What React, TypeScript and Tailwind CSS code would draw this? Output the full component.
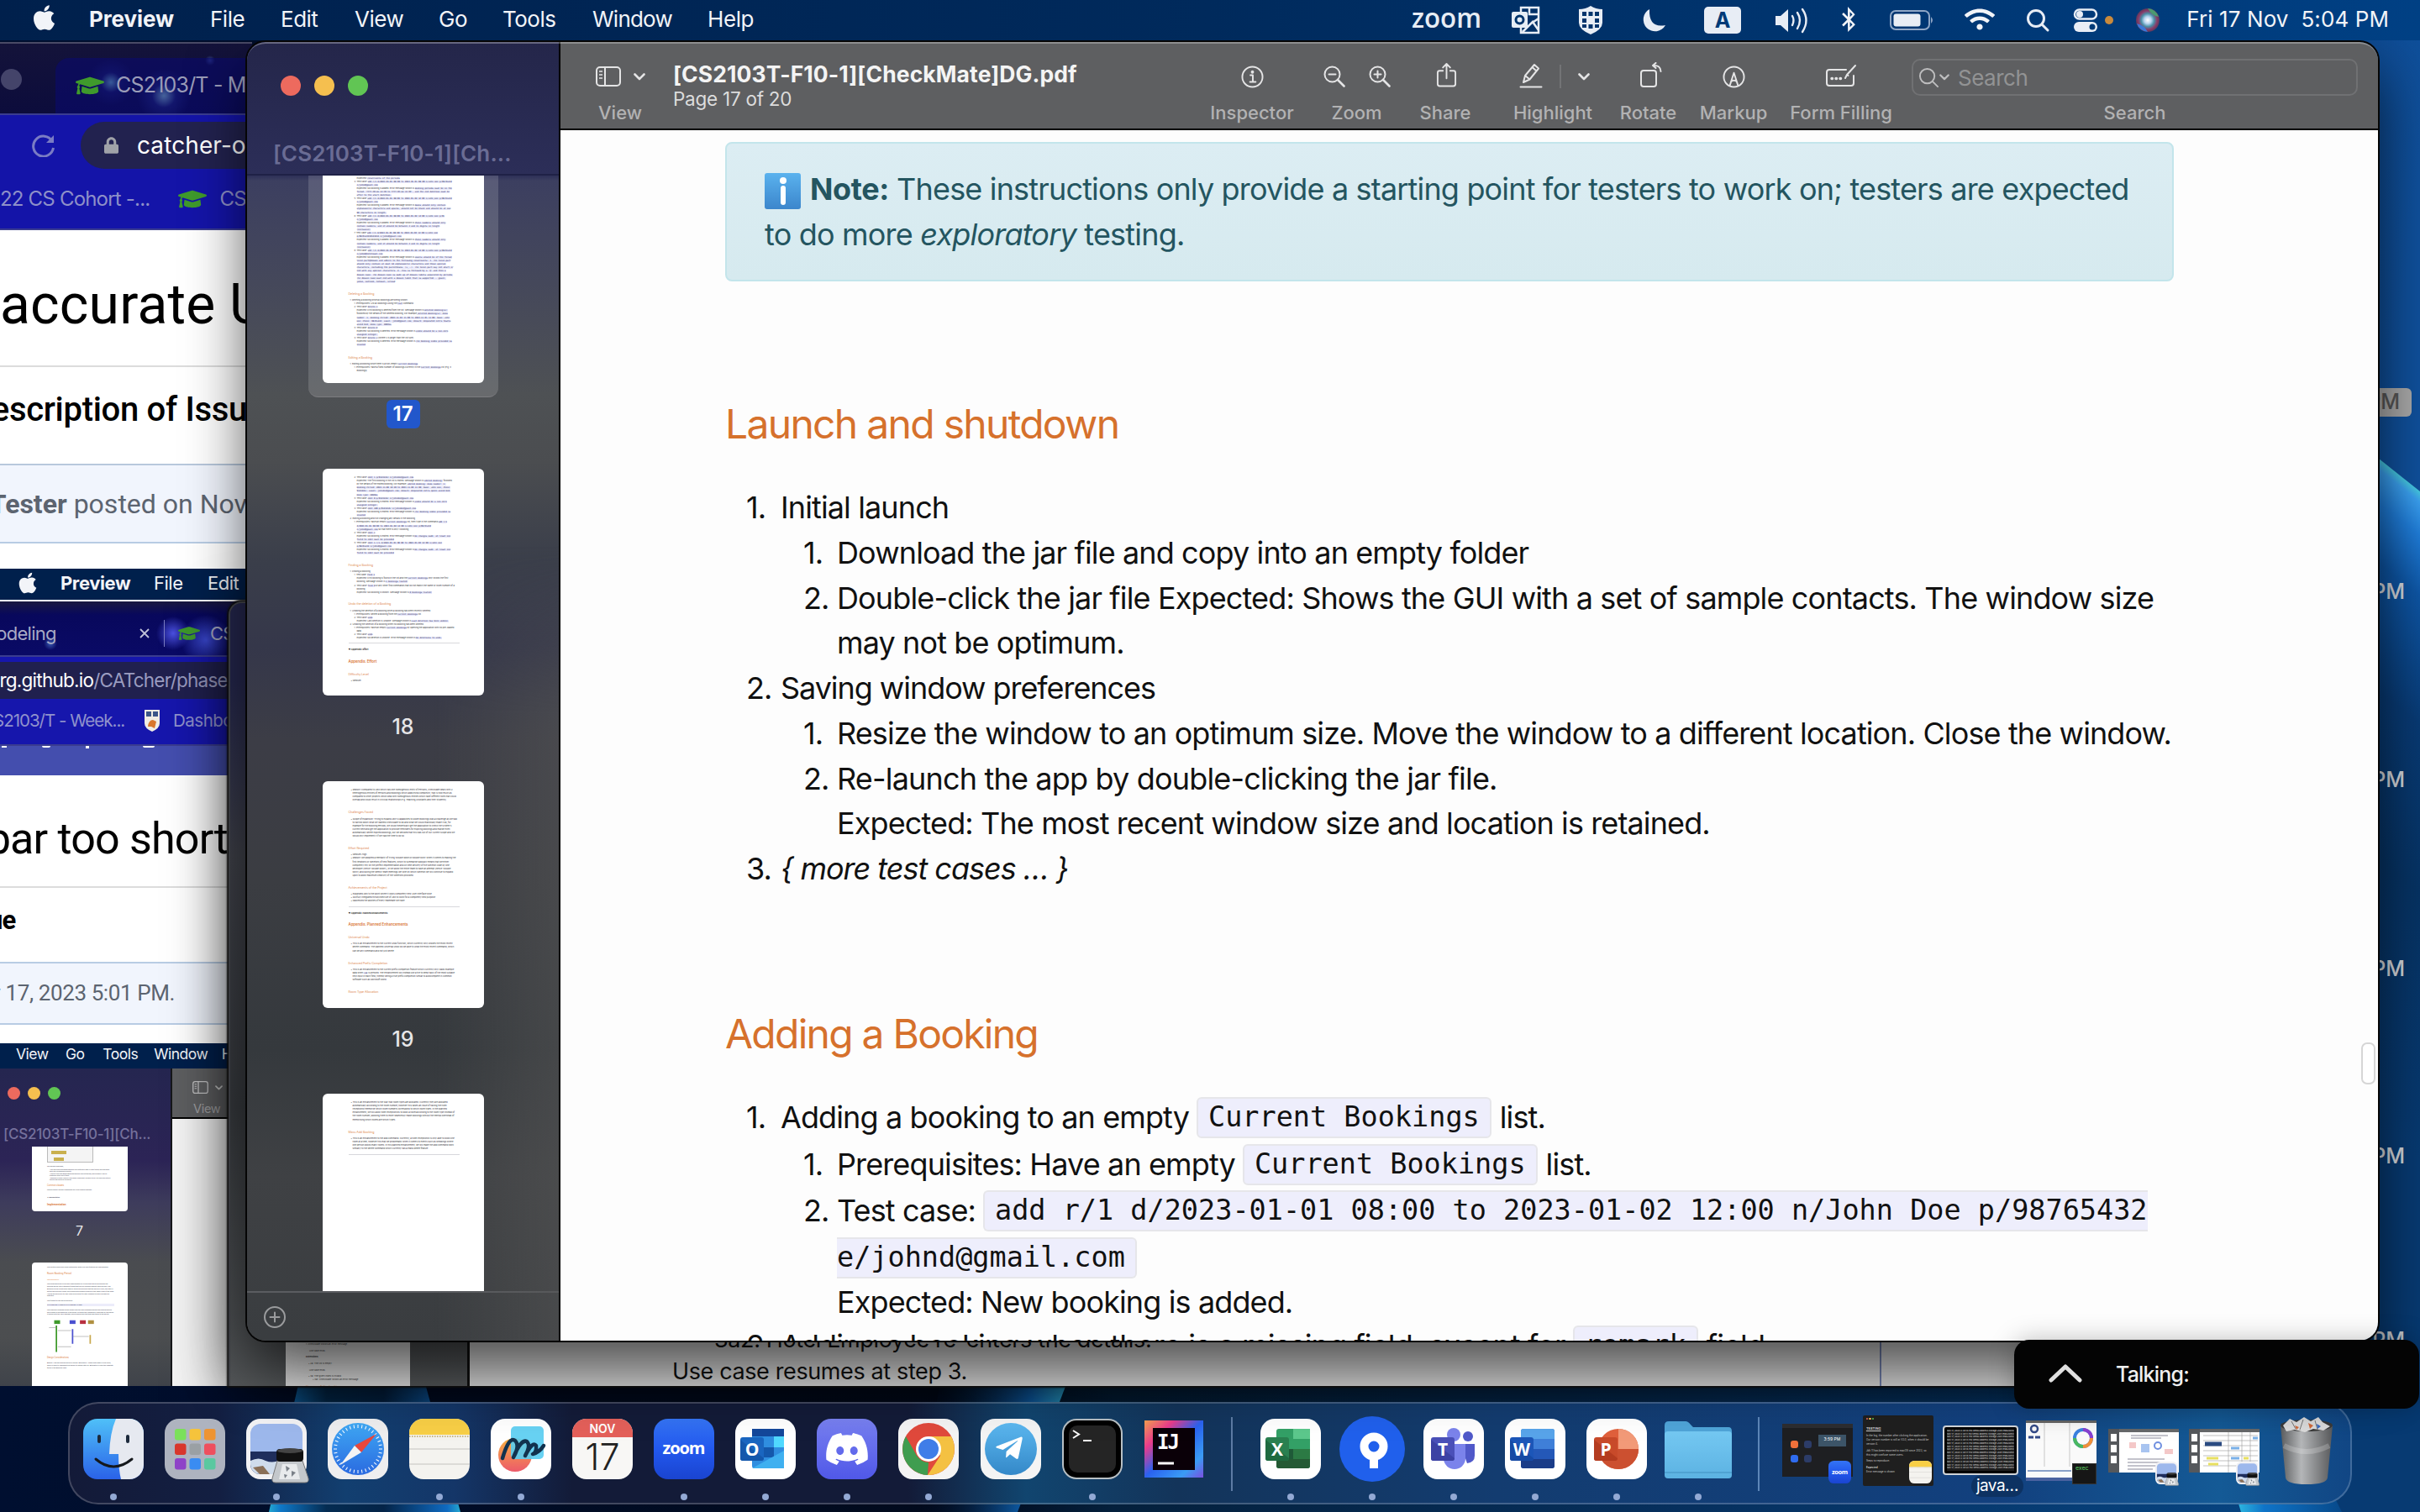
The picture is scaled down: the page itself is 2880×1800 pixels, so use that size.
import React from "react";
import { FaApple, FaBluetoothB, FaWifi, FaGraduationCap, FaDiscord, FaTelegramPlane, FaLock } from "react-icons/fa";

/* ---------- shared helpers ---------- */

function Rich({ text, code }: { text: string; code: string }) {
  return (
    <>
      {text.split("`").map((part, i) =>
        i % 2 ? (
          <span key={i} className={code}>
            {part}
          </span>
        ) : (
          <span key={i}>{part}</span>
        )
      )}
    </>
  );
}

function Chevron({ className }: { className: string }) {
  return (
    <svg viewBox="0 0 14 9" className={className} fill="none" stroke="currentColor" strokeWidth="2.6" strokeLinecap="round" strokeLinejoin="round">
      <path d="M1.5 1.5 7 7l5.500-5.500" />
    </svg>
  );
}

function SidebarIcon({ className }: { className: string }) {
  return (
    <svg viewBox="0 0 30 24" className={className} fill="none" stroke="currentColor" strokeWidth="2">
      <rect x="1" y="1" width="28" height="22" rx="4" />
      <path d="M11 1v22" />
      <path d="M4 6h4M4 10h4M4 14h4" strokeWidth="1.600" />
    </svg>
  );
}

/* ---------- wallpaper ---------- */

function Wallpaper() {
  return (
    <svg viewBox="0 0 2880 1800" className="absolute inset-0 h-[1800px] w-[2880px]">
      <defs>
        <linearGradient id="sky" x1="0" x2="1" y1="0" y2="0">
          <stop offset="0" stopColor="#000f30" />
          <stop offset=".4" stopColor="#010a1c" />
          <stop offset=".46" stopColor="#04203c" />
          <stop offset=".7" stopColor="#06305e" />
          <stop offset="1" stopColor="#07498a" />
        </linearGradient>
        <linearGradient id="right" x1="0" x2="1" y1="0" y2=".25">
          <stop offset="0" stopColor="#0a3a74" />
          <stop offset="1" stopColor="#0f509c" />
        </linearGradient>
        <linearGradient id="petal" gradientUnits="userSpaceOnUse" x1="2855" y1="562" x2="2465" y2="1052">
          <stop offset="0" stopColor="#48d4dc" />
          <stop offset=".02" stopColor="#3aa0f0" />
          <stop offset=".07" stopColor="#1f7cd8" />
          <stop offset=".16" stopColor="#0d55a4" />
          <stop offset=".35" stopColor="#083a74" />
          <stop offset=".6" stopColor="#063364" />
          <stop offset="1" stopColor="#073a72" />
        </linearGradient>
        <linearGradient id="stem" x1="0" x2="1" y1="0" y2="0">
          <stop offset="0" stopColor="#25a8d0" />
          <stop offset=".06" stopColor="#0f78c8" />
          <stop offset=".3" stopColor="#042c52" />
          <stop offset=".6" stopColor="#042448" />
          <stop offset=".93" stopColor="#0f6ac0" />
          <stop offset="1" stopColor="#25a8d0" />
        </linearGradient>
        <linearGradient id="leaf" x1="0" x2="1" y1="0" y2="0">
          <stop offset="0" stopColor="#010a1c" stopOpacity="0" />
          <stop offset=".75" stopColor="#0f66b8" />
          <stop offset="1" stopColor="#2fb4e0" />
        </linearGradient>
        <linearGradient id="tail" x1="0" x2="1" y1="0" y2="0">
          <stop offset="0" stopColor="#35c8e6" />
          <stop offset=".3" stopColor="#0f74c8" />
          <stop offset="1" stopColor="#07498a" />
        </linearGradient>
      </defs>
      <rect width="2880" height="1800" fill="url(#sky)" />
      <rect x="2600" width="280" height="700" fill="url(#right)" />
      <path d="M2700 442 2831 546 2880 585V1800H2700Z" fill="url(#petal)" />
      <path d="M357 1640h147l44 160H320Z" fill="url(#stem)" />
      <path d="M1120 1640h152l-61 160h-120Z" fill="url(#leaf)" />
      <path d="M2655 1760l12 40h120l-20-40Z" fill="url(#tail)" />
    </svg>
  );
}

function DesktopLabels() {
  const rows = [704, 928, 1153, 1376, 1595];
  return (
    <>
      <div className="absolute left-[2780px] top-[462px] flex h-[34px] w-[90px] items-center justify-end rounded-md bg-[#a9a9a9] pr-[14px] text-[25px] font-medium text-[#565656]">
        PM
      </div>
      {rows.map((y) => (
        <div key={y} className="absolute left-[2780px] w-[82px] text-right text-[25px] font-medium leading-[34px] text-[#d6d8dc]" style={{ top: y - 17 }}>
          PM
        </div>
      ))}
    </>
  );
}

/* ---------- menu bar ---------- */

function StatusIcons() {
  return (
    <svg viewBox="1660 0 930 48" className="h-[48px] w-[930px] shrink-0" fill="#e8edf5">
      <text x="1680" y="32.500" fontSize="33" fontFamily="Open Sans" fontWeight="600" textLength="83" lengthAdjust="spacingAndGlyphs">zoom</text>
      <g fill="none" stroke="#e8edf5" strokeWidth="2.500">
        <path d="M1810 14V9h21v30h-21v-6M1820 9v8h11M1812 38l12-12 7 10M1831 22l-9 6" />
      </g>
      <rect x="1799" y="14" width="19" height="19" rx="2" />
      <circle cx="1808.500" cy="23.500" r="4.500" fill="none" stroke="#00346c" strokeWidth="3" />
      <path d="M1879 11q8 0 14-4 6 4 14 4v16q0 8-14 14-14-6-14-14z" />
      <g fill="#00346c">
        <rect x="1883" y="14" width="5" height="5" /><rect x="1890.500" y="14" width="5" height="5" /><rect x="1898" y="14" width="5" height="5" />
        <rect x="1883" y="22" width="5" height="5" /><rect x="1898" y="22" width="5" height="5" />
        <rect x="1883" y="29" width="5" height="4" /><rect x="1890.500" y="29" width="5" height="5" /><rect x="1898" y="29" width="5" height="4" />
      </g>
      <path d="M1963 11a14 14 0 1 0 19 19q-20 4-19-19z" />
      <rect x="2028" y="8" width="44" height="32" rx="5" />
      <text x="2050" y="33" fontSize="25" fontWeight="700" fontFamily="Inter" textAnchor="middle" fill="#003a77">A</text>
      <path d="M2113 19h6l9-8v27l-9-8h-6z" />
      <g fill="none" stroke="#e8edf5" strokeWidth="2.400" strokeLinecap="round">
        <path d="M2133 19q3 5 0 11M2139 15q6 9 0 19M2145 11q9 13 0 27" />
      </g>
      <rect x="2250" y="13" width="46" height="22" rx="6" fill="none" stroke="#8fa6c6" strokeWidth="2" />
      <rect x="2253.500" y="16.500" width="32" height="15" rx="3" />
      <path d="M2298 20q4 4 0 8z" fill="#8fa6c6" />
      <g fill="none" stroke="#e8edf5" strokeWidth="3">
        <circle cx="2423" cy="22" r="9.500" />
        <path d="m2430 29 7 7" strokeLinecap="round" />
        <rect x="2469" y="11.500" width="26" height="11" rx="5.500" strokeWidth="2.500" />
      </g>
      <circle cx="2475" cy="17" r="4" />
      <rect x="2468" y="26" width="28" height="12" rx="6" />
      <circle cx="2490" cy="32" r="3.500" fill="#003a77" />
      <circle cx="2510" cy="24" r="5" fill="#c98a3c" />
      <defs>
        <radialGradient id="siri">
          <stop offset="0" stopColor="#fff" /><stop offset=".3" stopColor="#b8d4f0" /><stop offset=".55" stopColor="#4a90a8" /><stop offset=".8" stopColor="#8a3a68" /><stop offset="1" stopColor="#5a3a5c" />
        </radialGradient>
      </defs>
      <circle cx="2556" cy="24" r="14" fill="url(#siri)" />
      <path d="M2543 28a14 14 0 0 0 13 10q-4-8-13-10z" fill="#3a78d8" />
      <path d="M2556 10a14 14 0 0 1 13 10q-8-1-13-10z" fill="#4a9a70" />
    </svg>
  );
}

function MenuBar() {
  return (
    <div className="absolute left-0 top-0 flex h-[48px] w-[2880px] items-center bg-gradient-to-r from-[#00204c] via-[#002a5c] to-[#004084] text-[26px] text-[#f2f4f8]">
      <FaApple className="ml-[38px] h-[34px] w-[29px] -translate-y-[3px]" />
      <div className="flex pb-[3px]">
        <span className="ml-[39px] w-[144px] font-bold tracking-[-0.1px]">Preview</span>
        <span className="w-[84px] tracking-[-0.5px]">File</span>
        <span className="w-[88px] tracking-[-0.5px]">Edit</span>
        <span className="w-[100px] tracking-[-0.5px]">View</span>
        <span className="w-[76px] tracking-[-0.5px]">Go</span>
        <span className="w-[107px] tracking-[-0.5px]">Tools</span>
        <span className="w-[137px] tracking-[-0.77px]">Window</span>
        <span className="tracking-[-0.4px]">Help</span>
      </div>
      <div className="relative ml-auto">
        <StatusIcons />
        <FaBluetoothB className="absolute left-[529px] top-[8px] h-[30px] w-[22px]" />
        <FaWifi className="absolute left-[678px] top-[8px] h-[30px] w-[36px]" />
      </div>
      <span className="ml-[12px] mr-[37px] whitespace-pre pb-[3px] tracking-[0.1px]">Fri 17 Nov  5:04 PM</span>
    </div>
  );
}

/* ---------- page thumbnails ---------- */

type Line = [number, number, string, string?]; // top gap, indent, text, kind

const P17: Line[] = [
  [3, 10, "Expected: `constraints of the periods`"],
  [0, 7, "4. Test case: `add r/1 d/2023-01-01 08:00 to 2023-01-01 08:00 n/John Doe p/98765432`"],
  [0, 10, "`e/johnd@gmail.com`"],
  [0, 10, "Expected: No booking is added. Error message shown is `Booking periods must be in the`"],
  [0, 10, "`format 'YYYY-MM-DD HH:MM to YYYY-MM-DD HH:MM', and the end datetime must be`"],
  [0, 10, "`after to the start datetime.`"],
  [0, 7, "5. Test case: `add r/1 d/2023-01-01 08:00 to 2023-01-02 12:00 n/John_Doe p/98765432`"],
  [0, 10, "`e/johnd@gmail.com`"],
  [0, 10, "Expected: No booking is added. Error message shown is `Names should only contain`"],
  [0, 10, "`alphanumeric characters and spaces, should not be blank and should be at max`"],
  [0, 10, "`80 characters in length.`"],
  [0, 7, "6. Test case: `add r/1 d/2023-01-01 08:00 to 2023-01-02 12:00 n/John Doe p/91`"],
  [0, 10, "`e/johnd@gmail.com`"],
  [0, 10, "Expected: No booking is added. Error message shown is `Phone numbers should only`"],
  [0, 10, "`contain numbers, and it should be between 3 and 15 digits in length`"],
  [0, 10, "`(inclusive)`"],
  [0, 7, "7. Test case: `add r/1 d/2023-01-01 08:00 to 2023-01-02 12:00 n/John Doe`"],
  [0, 10, "`p/9876543210123456 e/johnd@gmail.com`"],
  [0, 10, "Expected: No booking is added. Error message shown is `Phone numbers should only`"],
  [0, 10, "`contain numbers, and it should be between 3 and 15 digits in length`"],
  [0, 10, "`(inclusive)`"],
  [0, 7, "8. Test case: `add r/1 d/2023-01-01 08:00 to 2023-01-02 12:00 n/John Doe p/98765432`"],
  [0, 10, "`e/johnd@hotelmail.com`"],
  [0, 10, "Expected: No booking is added. Error message shown is `Emails should be of the format`"],
  [0, 10, "`local-part@domain and adhere to the following constraints: 1. The local-part`"],
  [0, 10, "`should only contain at most 50 alphanumeric characters and these special`"],
  [0, 10, "`characters, excluding the parentheses, (+_.-). The local-part may not start or`"],
  [0, 10, "`end with any special characters. 2. This is followed by a '@' and then a`"],
  [0, 10, "`domain name. The domain name is made up of domain labels separated by periods.`"],
  [0, 10, "`The domain name must end with a domain label that is supported -- gmail,`"],
  [0, 10, "`yahoo, outlook, hotmail, icloud`"],
  [11, 0, "Deleting a Booking", "h"],
  [3, 2, "1. Deleting a booking while all bookings are being shown"],
  [0, 7, "1. Prerequisites: List all bookings using the `list` command."],
  [0, 7, "2. Test case: `delete 1`"],
  [0, 10, "Expected: First booking is deleted from the list. Message shown is `Deleted Booking(s):`"],
  [0, 10, "followed by the details of the deleted booking. For example, `Deleted Booking(s): Room`"],
  [0, 10, "`number: 1; Booking Period: 2023-11-03 15:00 to 2023-11-05 11:00; Name: John`"],
  [0, 10, "`Doe; Phone: 98765432; Email: johnd@gmail.com; Remark: Requested extra towels`"],
  [0, 10, "`sized bed; Room Type: NORMAL`"],
  [0, 7, "3. Test case: `delete 0`"],
  [0, 10, "Expected: No booking is deleted. Error message shown is `Index should be a non-zero`"],
  [0, 10, "`unsigned integer.`"],
  [0, 7, "4. Test case: `delete x` (where x is larger than the list size)"],
  [0, 10, "Expected: No booking is deleted. Error message shown is `The booking index provided is`"],
  [0, 10, "`invalid`"],
  [11, 0, "Editing a Booking", "h"],
  [3, 2, "1. Editing a booking while there is a non-empty `Current Bookings`."],
  [0, 7, "1. Prerequisites: Have a fixed number of bookings currently in the `Current Bookings` list (e.g. 3"],
  [0, 10, "Bookings)"],
];

const P18: Line[] = [
  [8, 7, "2. Test case: `edit 1 p/91234567 e/johndoe@gmail.com`"],
  [0, 10, "Expected: The first booking in the list is edited. Message shown is `Edited Booking:` followed"],
  [0, 10, "by the details of the edited booking. For example, `Edited Booking: Room number: 1;`"],
  [0, 10, "`Booking Period: 2023-11-08 10:20 to 2023-11-09 11:00; Name: John Doe; Phone:`"],
  [0, 10, "`91234567; Email: johndoe@gmail.com; Remark: Requested extra queen sized bed;`"],
  [0, 10, "`Room Type: NORMAL`"],
  [0, 7, "3. Test case: `edit 0 p/91234567 e/johndoe@gmail.com`"],
  [0, 10, "Expected: No booking is edited. Error message shown is `Index should be a non-zero`"],
  [0, 10, "`unsigned integer.`"],
  [0, 7, "4. Test case: `edit 100 p/91234567 e/johndoe@gmail.com`"],
  [0, 10, "Expected: No booking is edited. Error message shown is `The booking index provided is`"],
  [0, 10, "`invalid`"],
  [0, 2, "2. Editing a booking and not changing any details in the booking."],
  [0, 7, "1. Prerequisites: Have an empty `Current Bookings` list, then type in the command `add r/1`"],
  [0, 10, "`d/2023-01-01 08:00 to 2023-01-02 12:00 n/John Doe p/98765432`"],
  [0, 10, "`e/johnd@gmail.com` so that there is only 1 booking."],
  [0, 7, "2. Test case: `edit 1`"],
  [0, 10, "Expected: No booking is edited. Error message shown is `No changes made. At least one`"],
  [0, 10, "`field to edit must be provided`"],
  [0, 7, "3. Test case: `edit 1 r/1 d/2023-01-01 08:00 to 2023-01-02 12:00 n/John Doe`"],
  [0, 10, "`p/98765432 e/johnd@gmail.com`"],
  [0, 10, "Expected: No booking is edited. Error message shown is `No changes made. At least one`"],
  [0, 10, "`field to edit must be provided`"],
  [10.5, 0, "Finding a Booking", "h"],
  [3, 2, "1. Finding a booking."],
  [0, 7, "1. Test case: `find 1`"],
  [0, 10, "Expected: First booking is found in the list and the `Current Bookings` only shows the first"],
  [0, 10, "booking. Message shown is `1 bookings listed!`"],
  [0, 7, "2. Test case: `find 0` or any other find commands that do not match the name or room number of a"],
  [0, 10, "booking."],
  [0, 10, "Expected: No booking is shown. Message shown is `0 bookings listed!`"],
  [10.5, 0, "Undo the deletion of a Booking", "h"],
  [3, 2, "1. Undoing the deletion of a booking when a booking has been recently deleted."],
  [0, 7, "1. Prerequisites: Delete a booking from the `Current Bookings` list."],
  [0, 7, "2. Test case: `undo`"],
  [0, 10, "Expected: Last deletion is undone. Message shown is `Last deletion has been undone.`"],
  [0, 2, "2. Undoing the deletion of a booking when no booking has been deleted."],
  [0, 7, "1. Prerequisites: Have an empty `Current Bookings` by opening the application with no pre-loaded"],
  [0, 10, "data."],
  [0, 7, "2. Test case: `undo`"],
  [0, 10, "Expected: No deletion is undone. Error message shown is `No deletions to undo.`"],
  [4, 0, "", "r"],
  [5, 0, "▼ Appendix: Effort", "b"],
  [10.5, 0, "Appendix: Effort", "H"],
  [11, 0, "Difficulty Level", "h"],
  [3, 3, "• Medium"],
];

const P19: Line[] = [
  [8, 3, "• Reason: Compared to AB3 which has one homogenous entity of Persons, CheckMate deals with 2"],
  [0, 5, "heterogenous entities of Persons and Bookings which adds extra complexity, that is how much as"],
  [0, 5, "compared to other projects which deal with homogenous entities which have different roles that could"],
  [0, 5, "overlap and could result in cyclical relationships e.g. Teaching Assistants and their students)."],
  [11, 0, "Challenges Faced", "h"],
  [3, 3, "• Scope of expansion: Trying to expand AB3's capabilities to Room Bookings was a challenge as we had"],
  [0, 5, "to narrow down what we wanted CheckMate to do and what we could realistically make it do, for"],
  [0, 5, "example for the Booking Periods, we could theoretically get the application to check the system's"],
  [0, 5, "current time and get the application to provide reminders for expiring bookings and maybe even"],
  [0, 5, "automatically delete expired bookings, but we decided that this was out of our current scope and we"],
  [0, 5, "would only implement it if we had the time to do so."],
  [11, 0, "Effort Required", "h"],
  [3, 3, "• Medium-High"],
  [0, 3, "• Reason: We adopted a mentality of trying 'Double down or double work' when it comes to making the"],
  [0, 5, "first iterations or skeletons of new features, which to summarise basically means that we either"],
  [0, 5, "completely rely on the perfect implementation and on time delivery of the skeleton code by one"],
  [0, 5, "developer (hence 'Double down'), or we allow the entire team to have an attempt (hence 'Double"],
  [0, 5, "work') and during the weekly team meetings we vote on which skeleton we will continue to expand"],
  [0, 5, "upon to allow maximum creativity of the skeletons provided."],
  [11, 0, "Achievements of the Project", "h"],
  [3, 3, "• Expanded AB3 to the point where it looks completely new User Interface wise."],
  [0, 3, "• Skillfully integrated the architecture of AB3 to work for a completely new purpose."],
  [0, 3, "• Maximised the abilities of every teammate we have."],
  [4, 0, "", "r"],
  [5, 0, "▼ Appendix: Planned Enhancements", "b"],
  [10.5, 0, "Appendix: Planned Enhancements", "H"],
  [11, 0, "Universal Undo", "h"],
  [3, 3, "• This is an enhancement to the current undo function, which currently only undoes the most recent"],
  [0, 5, "delete command. The planned universal undo will be able to undo the most recent command, which"],
  [0, 5, "can be any command and not just delete."],
  [11, 0, "Enhanced Prefix Completion", "h"],
  [3, 3, "• This is an enhancement to the current prefix completion feature which currently only loads example"],
  [0, 5, "data when `TAB` is pressed. The enhancement will instead use a trie to keep track of the most suitable"],
  [0, 5, "next input in each field, thereby being a true prefix completion similar to autocomplete in common"],
  [0, 5, "software such as Microsoft Word."],
  [11, 0, "Room Type Allocation", "h"],
];

const P20: Line[] = [
  [8, 3, "• This is an enhancement to the way that room types are allocated. Currently they are allocated"],
  [0, 5, "automatically according to the room number, however this raises an issue of having the hotel"],
  [0, 5, "receptionist memorise which room numbers correspond to which room types. In the planned"],
  [0, 5, "enhancement, we will allow hotel receptionists to book a room according to the room type instead of"],
  [0, 5, "the room number, allowing them to more seamlessly make bookings without the mental overhead of"],
  [0, 5, "memorising which rooms are which types."],
  [11, 0, "Mass Add Booking", "h"],
  [3, 3, "• This is an enhancement to the add command. Currently, a hotel receptionist is only able to book one"],
  [0, 5, "room at a time, however this may be problematic when it comes to events such as weddings where"],
  [0, 5, "one person books many rooms. In this planned enhancement, we will make the add command work"],
  [0, 5, "similarly to the delete command which currently has a mass delete feature."],
  [5, 0, "", "r"],
];

function PageText({ lines }: { lines: Line[] }) {
  return (
    <>
      {lines.map(([gap, indent, text, kind], i) => {
        if (kind === "r") return <div key={i} className="h-px w-[132px] bg-[#d8d8dc]" style={{ marginTop: gap }} />;
        const look =
          kind === "h" ? "text-[3.6px] text-[#e08a50]"
          : kind === "H" ? "text-[4.4px] font-semibold text-[#d9783a]"
          : kind === "b" ? "text-[2.7px] font-bold text-[#333]"
          : "text-[2.7px] text-[#3a3a42]";
        return (
          <div key={i} className={"h-[4.12px] whitespace-nowrap leading-[4.12px] tracking-[-0.06px] " + look} style={{ marginTop: gap, marginLeft: indent }}>
            <Rich text={text} code="bg-[#e8e8fa] font-['DejaVu_Sans_Mono'] text-[2.56px] text-[#2c2c5a]" />
          </div>
        );
      })}
    </>
  );
}

/* ---------- main Preview window ---------- */

function Sidebar() {
  return (
    <div className="relative flex w-[371px] shrink-0 flex-col overflow-hidden bg-[linear-gradient(180deg,#232549_0px,#2b2d56_158px,#3c3f60_165px,#46495a_300px,#4e5154_420px,#4b4d50_500px,#3a3e4a_620px,#35374a_720px,#3c3d46_830px,#3b3d42_1000px,#35393d_1200px,#3f4144_1350px,#3a3d40_1540px)]">
      <div className="pointer-events-none absolute right-0 top-[600px] h-[947px] w-[150px] bg-gradient-to-r from-transparent to-[#56565680] [mask-image:linear-gradient(180deg,transparent,black_200px)]" />
      <div className="flex h-[159px] shrink-0 flex-col border-b-2 border-[#1f2146] bg-[linear-gradient(180deg,#24264a,#2c2e58)]">
        <div className="mt-[40px] flex gap-4 pl-[40px]">
          <span className="size-6 rounded-full bg-[#ed6a5e]" />
          <span className="size-6 rounded-full bg-[#f5bf4f]" />
          <span className="size-6 rounded-full bg-[#61c554]" />
        </div>
        <div className="mt-[53px] pl-[31px] text-[26px] font-semibold leading-[32px] tracking-[0.15px] text-[#6a6c94]">[CS2103T-F10-1][Ch...</div>
      </div>
      <div className="relative flex flex-1 flex-col items-center overflow-hidden">
        <div className="h-[264px] w-[226px] shrink-0 rounded-b-xl border-b border-[#7c7c80] bg-white/15 px-[17px]">
          <div className="h-[247px] overflow-hidden rounded-b-[6px] bg-white pl-[31px]">
            <div className="-mt-[2.500px]">
              <PageText lines={P17} />
            </div>
          </div>
        </div>
        <div className="mt-[3px] flex h-[34px] w-[40px] shrink-0 items-center justify-center rounded-md bg-[#2257cb] text-[24px] font-semibold text-white">17</div>
        <Page lines={P18} className="mt-[48px] h-[270px]" />
        <Num>18</Num>
        <Page lines={P19} className="mt-[47px] h-[270px]" />
        <Num>19</Num>
        <Page lines={P20} className="mt-[47px] h-[270px]" />
      </div>
      <div className="flex h-[59px] shrink-0 items-center border-t-2 border-[#5a5c60] pl-[20px]">
        <svg viewBox="0 0 26 26" className="size-[26px]" fill="none" stroke="#9a9b9d" strokeWidth="2" strokeLinecap="round">
          <circle cx="13" cy="13" r="12" />
          <path d="M13 7.500v11M7.500 13h11" />
        </svg>
      </div>
    </div>
  );
}

function Page({ lines, className }: { lines: Line[]; className: string }) {
  return (
    <div className={"w-[192px] shrink-0 overflow-hidden rounded-[6px] bg-white pl-[31px] " + className}>
      <PageText lines={lines} />
    </div>
  );
}

function Num({ children }: { children: string }) {
  return <div className="mt-[21px] flex h-[34px] shrink-0 items-center text-[25px] font-medium text-[#e6e6e8]">{children}</div>;
}

function Tool({ label, className, children }: { label: string; className: string; children: React.ReactNode }) {
  return (
    <div className={"flex shrink-0 flex-col items-center pt-[22px] " + className}>
      <div className="flex h-[38px] items-center justify-center text-[#e4e4e5]">{children}</div>
      <div className="mt-[10px] h-[28px] whitespace-nowrap text-[22px] font-medium leading-[28px] text-[#b2b2b3]">{label}</div>
    </div>
  );
}

const stroke = { fill: "none", stroke: "currentColor", strokeWidth: 2, strokeLinecap: "round" as const, strokeLinejoin: "round" as const };

function Magnifier({ plus }: { plus?: boolean }) {
  return (
    <svg viewBox="0 0 26 26" className="size-[26px]" {...stroke}>
      <circle cx="10.500" cy="10.500" r="9" />
      <path d="m17 17 7.500 7.500" strokeWidth="2.600" />
      <path d={plus ? "M6.500 10.500h8M10.500 6.500v8" : "M6.500 10.500h8"} />
    </svg>
  );
}

function Toolbar() {
  return (
    <div className="flex h-[105px] shrink-0 border-b-2 border-black bg-[#5e5f61] pl-[8px]">
      <Tool label="View" className="w-[126px]">
        <SidebarIcon className="h-[24px] w-[30px]" />
        <Chevron className="ml-[15px] h-[9px] w-[14px]" />
      </Tool>
      <div className="w-[629px] pt-[20px]">
        <div className="text-[26.500px] font-bold leading-[36px] tracking-[0.1px] text-[#f4f4f4]">[CS2103T-F10-1][CheckMate]DG.pdf</div>
        <div className="-mt-[2px] text-[22.500px] leading-[28px] tracking-[-0.25px] text-[#dcdcdc]">Page 17 of 20</div>
      </div>
      <Tool label="Inspector" className="w-[120px]">
        <svg viewBox="0 0 28 28" className="size-[27px]" {...stroke}>
          <circle cx="14" cy="14" r="12.500" />
          <path d="M11.500 12H14.500V20M11 20.300h7" />
          <circle cx="14" cy="8" r="1" fill="currentColor" />
        </svg>
      </Tool>
      <Tool label="Zoom" className="w-[129px]">
        <Magnifier />
        <span className="w-[28px]" />
        <Magnifier plus />
      </Tool>
      <Tool label="Share" className="w-[82px]">
        <svg viewBox="0 0 26 32" className="-mt-[4px] ml-[2px] h-[31px] w-[25px]" {...stroke}>
          <path d="M8.500 10.500H4.500a2.500 2.500 0 0 0-2.500 2.500v14a2.500 2.500 0 0 0 2.500 2.500h17a2.500 2.500 0 0 0 2.500-2.500V13a2.500 2.500 0 0 0-2.500-2.500h-4M13 20V2M8.500 6.500 13 2l4.500 4.500" />
        </svg>
      </Tool>
      <Tool label="Highlight" className="ml-[27px] w-[120px]">
        <svg viewBox="0 0 28 30" className="-mt-[3px] ml-[3px] h-[30px] w-[28px]" {...stroke}>
          <path d="M1.500 28.500h25M5 23l2-8L18 2l5 4.500L12.500 19.500 5 23zM7 15l5.500 4.500M15.500 5l5 4.500" />
        </svg>
        <span className="mx-[20px] h-[28px] w-[2px] bg-[#737476]" />
        <Chevron className="h-[9px] w-[14px]" />
      </Tool>
      <Tool label="Rotate" className="w-[107px]">
        <svg viewBox="0 0 28 30" className="-mt-[4px] ml-[6px] h-[30px] w-[28px]" {...stroke}>
          <rect x="2" y="10" width="18" height="19" rx="3" />
          <path d="M16 4q9-1 9.500 7M19.500 1 16 4l3.500 3" />
        </svg>
      </Tool>
      <Tool label="Markup" className="w-[96px]">
        <svg viewBox="0 0 28 28" className="size-[27px]" {...stroke}>
          <circle cx="14" cy="14" r="12.500" />
          <path d="M9 24.500 14 9l5 15.500M11 19.500q3-2 6 0" />
        </svg>
      </Tool>
      <Tool label="Form Filling" className="w-[160px]">
        <svg viewBox="0 0 38 28" className="-mt-[2px] h-[28px] w-[38px]" {...stroke}>
          <path d="M25 7H5a3 3 0 0 0-3 3v13a3 3 0 0 0 3 3h26a3 3 0 0 0 3-3v-9M24 17l2-4L36 2M26 13l1.500 1" />
          <path d="M8 17.500h.5M13 17.500h.5M18 17.500h.5" strokeWidth="3.500" />
        </svg>
      </Tool>
      <div className="ml-[4px] flex w-[531px] flex-col items-center pt-[20px]">
        <div className="flex h-[44px] w-full items-center rounded-[10px] border-2 border-[#707173] pl-[6px] text-[#bdbdbe]">
          <svg viewBox="0 0 26 26" className="size-[25px]" {...stroke}>
            <circle cx="11" cy="11" r="9" />
            <path d="m17.500 17.500 6.500 6.500" />
          </svg>
          <Chevron className="h-[8px] w-[12px]" />
          <span className="ml-[10px] text-[26px] tracking-[-0.5px] text-[#929394]">Search</span>
        </div>
        <div className="mt-[6px] text-[22px] font-medium leading-[28px] text-[#b2b2b3]">Search</div>
      </div>
    </div>
  );
}

const CODE =
  "ml-[9px] mr-[10px] inline-flex h-[49px] items-center rounded-[6px] border-2 border-[#e6e6ea] bg-[#eeeefc] px-[12px] font-['DejaVu_Sans_Mono'] text-[33.5px] tracking-normal";
const CODE_HEAD =
  "ml-[9px] inline-flex h-[49px] items-center rounded-l-[6px] border-2 border-r-0 border-[#e6e6ea] bg-[#eeeefc] pl-[12px] font-['DejaVu_Sans_Mono'] text-[33.5px] tracking-normal";
const CODE_TAIL =
  "inline-flex h-[49px] items-center rounded-r-[6px] border-2 border-l-0 border-[#e6e6ea] bg-[#eeeefc] pr-[12px] font-['DejaVu_Sans_Mono'] text-[33.5px] tracking-normal";

function Item({ n, level, h, children }: { n?: string; level: 1 | 2; h?: string; children: React.ReactNode }) {
  return (
    <div className={"flex items-center whitespace-nowrap " + (h ?? "h-[53.8px]")}>
      <span className={"shrink-0 " + (level === 1 ? "w-[66px] pl-[25px]" : "w-[133px] pl-[93px]")}>{n}</span>
      {children}
    </div>
  );
}

function Document() {
  return (
    <div className="relative flex-1 overflow-hidden bg-[#fdfdfd] pl-[196px] text-[36px] tracking-[-0.88px] text-[#111]">
      <div className="w-[1724px]">
        <div className="mt-[14px] h-[166px] rounded-[8px] border-2 border-[#c3e5eb] bg-gradient-to-b from-[#dcedf3] to-[#d6eaef] pl-[45px] pt-[28px] leading-[53.8px] text-[#245560]">
          <div className="flex items-center whitespace-pre tracking-[-0.83px]">
            <span className="mr-[11px] mt-[4px] flex h-[43px] w-[43px] items-center justify-center rounded-[3px] bg-gradient-to-b from-[#5ab2ee] to-[#3c86cc]">
              <svg viewBox="0 0 12 36" className="h-[36px] w-[12px]" fill="#fff">
                <circle cx="6" cy="5" r="4" />
                <rect x="3" y="11" width="6" height="23" rx="3" />
              </svg>
            </span>
            <b className="tracking-[-0.4px]">Note:</b> These instructions only provide a starting point for testers to work on; testers are expected
          </div>
          <div className="tracking-[-0.8px]">
            to do more <i>exploratory</i> testing.
          </div>
        </div>
        <h2 className="mt-[141px] h-[58px] text-[48px] leading-[58px] tracking-[-1.7px] text-[#d6712c]">Launch and shutdown</h2>
        <div className="mt-[43px]">
          <Item n="1." level={1}>Initial launch</Item>
          <Item n="1." level={2}>Download the jar file and copy into an empty folder</Item>
          <Item n="2." level={2}><span className="tracking-[-0.86px]">Double-click the jar file Expected: Shows the GUI with a set of sample contacts. The window size</span></Item>
          <Item level={2}>may not be optimum.</Item>
          <Item n="2." level={1}><span className="tracking-[-1.05px]">Saving window preferences</span></Item>
          <Item n="1." level={2}>Resize the window to an optimum size. Move the window to a different location. Close the window.</Item>
          <Item n="2." level={2}><span className="tracking-[-0.82px]">Re-launch the app by double-clicking the jar file.</span></Item>
          <Item level={2}>Expected: The most recent window size and location is retained.</Item>
          <Item n="3." level={1}><i className="tracking-[-1.02px]">{"{ more test cases … }"}</i></Item>
        </div>
        <h2 className="mt-[141px] h-[58px] text-[48px] leading-[58px] tracking-[-1.75px] text-[#d6712c]">Adding a Booking</h2>
        <div className="mt-[43px]">
          <Item n="1." level={1} h="h-[54px]">Adding a booking to an empty<span className={CODE}>Current Bookings</span>list.</Item>
          <Item n="1." level={2} h="h-[58px]">Prerequisites: Have an empty<span className={CODE}>Current Bookings</span>list.</Item>
          <Item n="2." level={2} h="h-[52px]">Test case:<span className={CODE_HEAD}>add r/1 d/2023-01-01 08:00 to 2023-01-02 12:00 n/John Doe p/98765432</span></Item>
          <Item level={2} h="h-[60px]"><span className={CODE_TAIL}>e/johnd@gmail.com</span></Item>
          <Item level={2} h="h-[46px]">Expected: New booking is added.</Item>
          <Item n="2." level={1} h="h-[58px]">Adding a booking when there is a missing field, except for<span className={CODE}>remark</span>field.</Item>
        </div>
      </div>
      <div className="absolute right-[3px] top-[1086px] h-[50px] w-[17px] rounded-[7px] border-2 border-[#d6d6d6] bg-white" />
    </div>
  );
}

function MainWindow() {
  return (
    <div className="absolute left-[294px] top-[50px] flex h-[1546px] w-[2536px] overflow-hidden rounded-[22px] shadow-[0_0_0_2px_#050505,0_36px_70px_rgba(0,0,0,0.65)]">
      <Sidebar />
      <div className="w-[2px] shrink-0 bg-black" />
      <div className="flex min-w-0 flex-1 flex-col">
        <Toolbar />
        <Document />
      </div>
      <div className="pointer-events-none absolute inset-0 rounded-[22px] border-t-2 border-t-white/30" />
    </div>
  );
}

/* ---------- windows behind ---------- */

const STARS =
  "bg-[radial-gradient(circle_at_132px_46px,#7fd0d8_0,#2a3aa055_12px,transparent_28px),radial-gradient(circle_at_195px_62px,#a0e8e0_0,#3a50b066_14px,transparent_32px),radial-gradient(circle_at_250px_20px,#3a4a90_0,transparent_6px),linear-gradient(180deg,#14133a,#0c0c3c)]";

function ChromeBehind() {
  return (
    <div className="absolute left-0 top-[50px] flex h-[1599px] w-[300px] flex-col overflow-hidden border-t-2 border-[#4a4a66] bg-white font-[Roboto]">
      <div className={"flex h-[83px] shrink-0 items-end font-[Inter] " + STARS}>
        <span className="mb-[28px] ml-px size-[25px] rounded-full bg-[#44446a]" />
        <div className="ml-[40px] flex h-[66px] flex-1 items-center rounded-tl-2xl bg-[#0a0a6e]/60 pl-[24px] text-[25px] tracking-[-0.8px] text-[#9a9cb8]">
          <FaGraduationCap className="mr-[14px] h-[30px] w-[34px] text-[#3f9a2c]" />
          <span className="whitespace-nowrap">CS2103/T - M</span>
        </div>
      </div>
      <div className="h-[139px] shrink-0 border-y-2 border-[#3a3c90] bg-[#1414a8] font-[Inter]">
        <div className="flex h-[72px] items-center">
          <svg viewBox="0 0 28 28" className="ml-[38px] size-[28px]" fill="none" stroke="#7a7cc4" strokeWidth="3">
            <path d="M24 9A12 12 0 1 0 25.500 17" />
            <path d="M26 2v9h-9z" fill="#7a7cc4" stroke="none" />
          </svg>
          <div className="ml-[30px] flex h-[56px] flex-1 items-center rounded-l-full bg-[#22224f] pl-[28px] text-[28px] text-white">
            <FaLock className="mr-[22px] h-[22px] w-[17px] text-[#a0a2a8]" />
            <span className="tracking-[0.1px]">catcher-o</span>
          </div>
        </div>
        <div className="flex h-[46px] items-center whitespace-nowrap pt-[10px] text-[24px] tracking-[-0.8px] text-[#8e90c8]">
          <span>22 CS Cohort -...</span>
          <FaGraduationCap className="ml-[34px] mr-[15px] h-[30px] w-[34px] text-[#3f9a2c]" />
          <span>CS</span>
        </div>
      </div>
      <div className="flex h-[163px] shrink-0 items-center whitespace-pre border-b-2 border-[#dcdcdc] pt-[15px] text-[66px] text-black">
        <span className="tracking-[0.2px]">accurate U</span>
      </div>
      <div className="flex h-[117px] w-[294px] shrink-0 items-center justify-end whitespace-nowrap border-b-2 border-[#b8c8dc] pb-[13px] text-[40px] font-medium tracking-[-0.3px] text-black">
        escription of Issu
      </div>
      <div className="flex h-[93px] w-[294px] shrink-0 items-center justify-end whitespace-pre border-b-2 border-[#b8cce4] bg-[#f1f5fd] text-[32px] text-[#5c6470]">
        <b>Tester</b> posted on Nov
      </div>
      <div className="mt-[30px] flex h-[37px] shrink-0 items-center bg-[#00204c] pb-[3px] font-[Inter] text-[22px] tracking-[-0.5px] text-[#f2f4f8]">
        <FaApple className="ml-[21px] h-[28px] w-[24px]" />
        <b className="ml-[27px] w-[111px] tracking-[-0.4px]">Preview</b>
        <span className="w-[64px]">File</span>
        <span>Edit</span>
      </div>
    </div>
  );
}

function NestedChrome() {
  return (
    <div className="absolute left-0 top-[716px] flex h-[934px] w-[300px] flex-col overflow-hidden bg-white font-[Roboto]">
      <div className="flex h-[64px] shrink-0 items-center whitespace-nowrap bg-[radial-gradient(circle_at_206px_38px,#4a50e0_0,transparent_20px),radial-gradient(circle_at_245px_46px,#3a48d0_0,transparent_30px),radial-gradient(circle_at_60px_50px,#3a58b0_0,transparent_8px),linear-gradient(180deg,#1a1940,#08085c_25%,#0a0a66)] pt-[12px] font-[Inter] text-[22px] tracking-[-0.7px] text-[#a8aac4]">
        <span className="w-[150px] overflow-hidden"><span className="-ml-[24px]">Modeling</span></span>
        <svg viewBox="0 0 12 12" className="ml-[16px] size-[12px]" stroke="#c0c2d8" strokeWidth="1.800"><path d="m1 1 10 10M11 1 1 11" /></svg>
        <span className="ml-[17px] h-[32px] w-px bg-[#7a7cc0]" />
        <FaGraduationCap className="ml-[16px] mr-[12px] h-[24px] w-[26px] text-[#3f9a2c]" />
        <span>CS</span>
      </div>
      <div className="h-[108px] shrink-0 border-y-2 border-[#3a3c90] bg-[#1616ac] pt-[6px] font-[Inter]">
        <div className="flex h-[44px] w-[271px] items-center justify-end whitespace-nowrap bg-[#20204e] text-[22.500px] tracking-[-0.75px] text-white">
          <span>org.github.io</span><span className="text-[#9a9cc0]">/CATcher/phase</span>
        </div>
        <div className="flex h-[52px] items-center whitespace-nowrap text-[20.500px] tracking-[-0.5px] text-[#9092cc]">
          <span className="w-[172px] overflow-hidden"><span className="-ml-[8px] tracking-[-1px]">S2103/T - Week...</span></span>
          <svg viewBox="0 0 18 26" className="h-[26px] w-[18px]"><path d="M0 0h18v16q0 6-9 10-9-4-9-10z" fill="#f0ece4" /><path d="M2 2h6v6H2zM10 2h6v6h-6z" fill="#3a5488" /><path d="M4 20q1-8 6-8l4 2-2 8-4-2z" fill="#d9762c" /></svg>
          <span className="ml-[16px]">Dashbo</span>
        </div>
      </div>
      <div className="h-[35px] shrink-0 bg-[#444eae]">
        <div className="flex gap-[42px] pl-[2px]"><span className="h-[2px] w-[6px] bg-white" /><span className="h-[2px] w-[10px] rounded-b bg-white" /><span className="h-[3px] w-[4px] bg-white" /><span className="ml-[22px] h-[2px] w-[14px] rounded-b bg-white" /></div>
      </div>
      <div className="flex h-[134px] w-[271px] shrink-0 items-center justify-end whitespace-nowrap border-b-2 border-[#dcdcdc] pt-[20px] text-[52px] tracking-[-0.8px] text-black">bar too short</div>
      <div className="flex h-[90px] w-[271px] shrink-0 items-center border-b-2 border-[#b8cce4] pb-[9px] text-[31px] font-bold text-black">
        <span className="-ml-[14px] tracking-[-0.8px]">ue</span>
      </div>
      <div className="flex h-[71px] w-[208px] shrink-0 items-center justify-end whitespace-nowrap bg-[#f1f5fd] text-[26px] tracking-[-0.4px] text-[#5c6470] shadow-[63px_0_0_#f1f5fd]">y 17, 2023 5:01 PM.</div>
      <div className="h-[24px] shrink-0 border-t-2 border-[#b8cce4]" />
      <div className="flex h-[30px] shrink-0 items-center whitespace-nowrap bg-[#00204c] pb-[3px] pl-[19px] font-[Inter] text-[17.500px] tracking-[-0.5px] text-[#f2f4f8]">
        <span className="w-[60px]">View</span><span className="w-[45px]">Go</span><span className="w-[62px]">Tools</span><span className="w-[82px]">Window</span><span>Help</span>
      </div>
      <div className="flex min-h-0 flex-1">
        <div className="flex w-[205px] shrink-0 flex-col border-r-2 border-[#16171a] bg-[linear-gradient(180deg,#252650_0,#2c2456_110px,#3e3c5c_160px,#4a4c50_230px,#4c4e50_320px,#3f434a_380px)]">
          <div className="mt-[22px] flex gap-[9px] pl-[9px]">
            <span className="size-[15px] rounded-full bg-[#ed6a5e]" /><span className="size-[15px] rounded-full bg-[#f5bf4f]" /><span className="size-[15px] rounded-full bg-[#61c554]" />
          </div>
          <div className="mt-[29px] h-[28px] whitespace-nowrap pl-[4px] font-[Inter] text-[17px] font-medium tracking-[-0.25px] text-[#75719c]">[CS2103T-F10-1][Ch...</div>
          <div className="ml-[38px] h-[77px] w-[114px] shrink-0 overflow-hidden rounded-b-[4px] bg-white pl-[18px] text-[1.800px] leading-[2.500px] text-[#445]">
            <div className="h-[19px] w-[55px] border-x border-b border-[#bbb] bg-[#f4f4f4] pl-[4px] pt-[5px]"><div className="h-[4px] w-[18px] bg-[#c9b04e]" /><div className="ml-[3px] mt-[4px] h-[4px] w-[12px] bg-[#c9b04e]" /></div>
            <div className="mt-[3px]">The Storage component,</div>
            <ul className="ml-[3px] mt-px w-[74px]"><li>• can save both CheckMate data and user preference data in JSON format, and read them back into corresponding objects.</li><li>• inherits from both AddressBookStorage and UserPrefStorage, which means it can be treated as either one of them.</li><li>• depends on some classes in the Model component, because its job is to save and retrieve objects that belong to the Model.</li></ul>
            <div className="mt-[5px] text-[2.600px] text-[#e08a50]">Common classes</div>
            <div className="mt-[2px] whitespace-nowrap">Classes used by multiple components are in the common package.</div>
            <div className="mt-[6px] font-bold">▼ Implementation</div>
            <div className="mt-[7px] text-[3.200px] font-bold text-[#d9783a]">Implementation</div>
          </div>
          <div className="-ml-[14px] h-[61px] shrink-0 pt-[11px] text-center font-[Inter] text-[16px] text-[#e6e6e8]">7</div>
          <div className="ml-[38px] h-[147px] w-[114px] shrink-0 overflow-hidden rounded-t-[4px] bg-white pl-[18px] pt-[4px] text-[2px] leading-[2.800px] text-[#445]">
            <div className="w-[80px]">
              <div>This section describes some noteworthy details on how features are implemented.</div>
              <div className="mt-[5px] text-[3px] text-[#e08a50]">Room Booking Period</div>
              <div className="mt-[4px] text-[#e08a50]">Implementation</div>
              <div className="mt-[3px]">The Room Booking Period was implemented by a class that stores and parses the booking period into a standard format that can be checked against other periods. The Booking Period constructor takes a string and ensures that the period is valid, the start is before the end and it does not overlap with another booking in the same room of the hotel. Having the period as its own class also allows for later changes to how overlaps are detected.</div>
              <div className="mt-[3px]">The format for the period must be:</div>
              <div className="mt-[2px] bg-[#ececfa]">YYYY-MM-DD HH:MM to YYYY-MM-DD HH:MM</div>
              <div className="mt-[3px]">The sequence diagram below shows how the add command parses the booking period and creates a new Booking in the model list when the command is executed by the parser. It begins with the logic manager, which passes the text that was typed to the parser.</div>
            </div>
            <svg viewBox="0 0 74 48" className="mt-[4px] h-[42px] w-[66px]">
              <rect x="9" y="2" width="8" height="5" fill="#3f9a2c" /><rect x="30" y="2" width="8" height="5" fill="#4a50d0" /><rect x="44" y="2" width="8" height="5" fill="#b83040" /><rect x="55" y="2" width="8" height="5" fill="#b09040" />
              <path d="M12 9v36" stroke="#3f9a2c" strokeWidth="2" /><path d="M34 14v20" stroke="#4a50d0" strokeWidth="2" /><path d="M58 22v12" stroke="#c9a84e" strokeWidth="2" />
              <path d="M2 12h10M14 16h18M34 24h22M14 38h18" stroke="#888" strokeWidth=".6" />
            </svg>
            <div className="mt-[4px] text-[2.600px] text-[#e08a50]">Design Considerations</div>
            <div className="mt-[2px] w-[80px]">Aspect: How the booking period is stored. Alternative 1 keeps both dates in one class, which is easy to implement but harder to extend later on. Alternative 2 uses two separate fields in the Booking class.</div>
          </div>
        </div>
        <div className="flex flex-1 flex-col bg-[#f4f4f4]">
          <div className="h-[60px] border-b-2 border-black bg-[#5e5f61] pl-[24px] pt-[15px] text-[#c4c4c5]">
            <div className="flex items-center"><SidebarIcon className="h-[15px] w-[19px]" /><Chevron className="ml-[8px] h-[6px] w-[9px]" /></div>
            <div className="ml-px mt-[8px] font-[Inter] text-[14.500px] leading-[20px] tracking-[-0.3px] text-[#a0a0a1]">View</div>
          </div>
        </div>
      </div>
    </div>
  );
}

function PreviewBehind() {
  return (
    <div className="absolute left-[272px] top-[716px] flex h-[934px] w-[2400px] items-end overflow-hidden rounded-tl-[16px] border-l-2 border-t-2 border-[#44464c] bg-[#2f3136] shadow-[0_0_2px_2px_#101010,0_20px_70px_rgba(0,0,0,0.6)]">
      <div className="flex h-full w-[282px] shrink-0 items-end bg-[linear-gradient(180deg,#24264c_0,#24264c_90px,#3e4048_300px,#35383c_600px,#55585a_934px)] pl-[66px]">
        <div className="h-[52px] w-[148px] overflow-hidden bg-[#e0e0e0] pl-[24px] text-[2.700px] leading-[4.500px] text-[#333]">
          <div>1. CheckMate shows an error message.</div><div className="ml-[4px] mt-[3px]">Use case ends.</div>
          <div className="mt-[3px] font-bold">Extensions</div><div className="ml-[3px] mt-[3px]">• 2a. The list is empty.</div><div className="ml-[4px] mt-[4px]">Use case ends.</div>
          <div className="ml-[3px] mt-[2px]">• 3a. The given index is invalid.</div><div className="ml-[8px]">◦ 3a1. CheckMate shows an error message.</div>
          <div className="mt-[4px] text-[3.500px] text-[#d9783a]">Use case: Edit a booking</div>
        </div>
      </div>
      <div className="h-full w-[3px] bg-[#111]" />
      <div className="flex h-full w-[1678px] flex-col justify-end bg-[#dcdcdc] pl-[241px] text-[27px] leading-[38px] tracking-[-0.38px] text-[#111]">
        <div className="whitespace-nowrap pl-[50px]">3a2. Hotel Employee re-enters the details.</div>
        <div className="mb-[-2px] whitespace-nowrap">Use case resumes at step 3.</div>
      </div>
      <div className="h-full w-[2px] bg-[#7482b0]" />
      <div className="h-full flex-1 bg-[#dedede]" />
    </div>
  );
}

/* ---------- dock ---------- */

function Squircle({ fill }: { fill: string }) {
  return <rect x="0" y="0" width="72" height="72" rx="17" fill={fill} />;
}

function Office({ a, b, letter, x, children }: { a: string; b: string; letter: string; x?: number; children: React.ReactNode }) {
  return (
    <>
      <Squircle fill="#fff" />
      {children}
      <rect x={x ?? 6} y="22" width="28" height="28" rx="3" fill={a} />
      <path d={`M${x ?? 6} 47v-22l28 22a3 3 0 0 1-3 3H${(x ?? 6) + 3}a3 3 0 0 1-3-3z`} fill={b} />
      <text x={(x ?? 6) + 14} y="44" fontFamily="Open Sans" fontWeight="700" fontSize="21" fill="#fff" textAnchor="middle">{letter}</text>
    </>
  );
}

function PreviewArt() {
  return (
    <>
      <Squircle fill="#f2f2f4" />
      <rect x="5" y="6" width="62" height="60" rx="12" fill="#9db8ec" />
      <path d="M5 39h62v16a12 12 0 0 1-12 11H17A12 12 0 0 1 5 54z" fill="#1f2e5c" />
      <path d="M5 50q10-5 18 0 10 4 18-2l6 18H17A12 12 0 0 1 5 54z" fill="#cfdcec" />
      <path d="M8 58l12-2 8 10H16z" fill="#8a7058" />
      <path d="M37 50h30l7 21q1 5-4 5H35q-5 0-4-5z" fill="#c4c8cc" stroke="#777" />
      <path d="M43 54h17l4 18H39z" fill="#e8eaec" />
      <path d="m47 56 5 3-4 4zM54 62l5 2-5 5zM45 66l4 1-3 4z" fill="#7a8088" />
      <rect x="36" y="36" width="32" height="15" rx="4" fill="#111" />
      <ellipse cx="52" cy="38" rx="15" ry="3" fill="#444" />
    </>
  );
}

const TICKS = Array.from({ length: 36 }, (_, i) => i * 10);

const ART: Record<string, React.ReactNode> = {
  finder: (
    <>
      <Squircle fill="url(#fb)" />
      <path d="M39 0h16a17 17 0 0 1 17 17v38a17 17 0 0 1-17 17H45q-3-12-3-30H31Q32 16 39 0z" fill="#e6e9f0" />
      <path d="M19 21v6M53 21v6" stroke="#1c2a3c" strokeWidth="4" strokeLinecap="round" />
      <path d="M15 48q21 18 43 0" fill="none" stroke="#15181c" strokeWidth="3" strokeLinecap="round" />
    </>
  ),
  launch: (
    <>
      <Squircle fill="#aeb3bf" />
      {["#7be05a", "#f5c33c", "#ee9432", "#d8362c", "#9aa0a4", "#ee4f5e", "#8e42c8", "#3a8cf2", "#5ac8a0"].map((c, i) => (
        <rect key={c} x={12 + (i % 3) * 17.5} y={12 + Math.floor(i / 3) * 17.5} width="13.500" height="13.500" rx="3" fill={c} />
      ))}
    </>
  ),
  preview: <PreviewArt />,
  safari: (
    <>
      <Squircle fill="#eeeeef" />
      <circle cx="36" cy="36" r="31" fill="url(#sf)" />
      {TICKS.map((t) => <path key={t} d="M36 7v4" stroke="#fff" strokeWidth="1" transform={`rotate(${t} 36 36)`} />)}
      <path d="M58 18 40 40 32 32z" fill="#e8473c" />
      <path d="M15 55 32 32 40 40z" fill="#f4f4f4" />
    </>
  ),
  notes: (
    <>
      <Squircle fill="#f4f3ef" />
      <path d="M0 19v-2A17 17 0 0 1 17 0h38a17 17 0 0 1 17 17v2z" fill="#f8cf46" />
      <path d="M0 21h72" stroke="#c8b88a" strokeDasharray="1.500 1.500" strokeWidth="2" /><path d="M0 36h72M0 54h72" stroke="#d4d3cf" strokeWidth="1.500" />
    </>
  ),
  freeform: (
    <>
      <Squircle fill="#fff" />
      <circle cx="29" cy="43" r="20" fill="url(#fo)" />
      <rect x="24" y="9" width="39" height="39" rx="5" fill="#58cdf2" opacity=".9" />
      <path d="M14 47Q22 20 29 26 35 32 27 46 36 24 43 27 48 32 41 44 50 26 54 32 55 40 50 42 58 40 63 32" fill="none" stroke="#12324e" strokeWidth="4.500" strokeLinecap="round" strokeLinejoin="round" />
    </>
  ),
  calendar: (
    <>
      <Squircle fill="#f8f7f5" />
      <path d="M0 22v-5A17 17 0 0 1 17 0h38a17 17 0 0 1 17 17v5z" fill="#e4605a" />
      <text x="36" y="17" fontFamily="Inter" fontWeight="600" fontSize="14" fill="#fff" textAnchor="middle">NOV</text>
      <text x="36" y="61" fontFamily="Inter" fontWeight="300" fontSize="43" fill="#222" textAnchor="middle" textLength="41">17</text>
    </>
  ),
  zoom: (
    <>
      <Squircle fill="url(#zm)" />
      <text x="36" y="42" fontFamily="Open Sans" fontWeight="700" fontSize="20" fill="#fff" textAnchor="middle" textLength="51">zoom</text>
    </>
  ),
  outlook: (
    <Office a="#1a66c0" b="#1458ac" letter="O" x={6}>
      <rect x="20" y="12" width="38" height="47" rx="3" fill="#2f8ee0" />
      <rect x="20" y="12" width="38" height="9" fill="#14479a" /><rect x="46" y="21" width="12" height="13" fill="#50d9ff" />
      <rect x="32" y="34" width="14" height="12" fill="#1458ac" />
      <path d="M20 59 58 38v21z" fill="#3fb0f0" />
    </Office>
  ),
  discord: <Squircle fill="url(#dc)" />,
  chrome: (
    <>
      <Squircle fill="#f4f4f4" />
      <circle cx="36" cy="36" r="31" fill="#e0493c" />
      <path d="M9 21 22 44q6 8 14 8l-1 15A31 31 0 0 1 9 21z" fill="#3f9d4f" />
      <path d="M35 67A31 31 0 0 0 63 21H36l14 23z" fill="#f4c142" />
      <circle cx="36" cy="36" r="15" fill="#fff" /><circle cx="36" cy="36" r="12" fill="#3f7de8" />
    </>
  ),
  telegram: (
    <>
      <Squircle fill="#f4f4f4" />
      <circle cx="36" cy="36" r="31" fill="url(#tg)" />
    </>
  ),
  terminal: (
    <>
      <rect x="0" y="0" width="72" height="72" rx="17" fill="#b8c0c4" />
      <rect x="2" y="2" width="68" height="68" rx="15" fill="#000" />
      <rect x="8" y="8" width="56" height="56" rx="10" fill="#252525" />
      <path d="m13 14 7 4.500-7 4.500" fill="none" stroke="#fff" strokeWidth="2" /><path d="M25 26h10" stroke="#fff" strokeWidth="2" />
    </>
  ),
  idea: (
    <>
      <rect x="1" y="2" width="70" height="68" fill="url(#ij)" />
      <rect x="11" y="11" width="50" height="50" fill="#0a0008" />
      <text x="16" y="36" fontFamily="DejaVu Sans Mono" fontWeight="700" fontSize="24" fill="#fff" textLength="27">IJ</text>
      <path d="M17 53h19" stroke="#fff" strokeWidth="3" />
    </>
  ),
  excel: (
    <Office a="#2a8050" b="#1f6a40" letter="X">
      <rect x="19" y="12" width="40" height="47" rx="3" fill="#33a066" /><rect x="39" y="12" width="20" height="12" fill="#5cc88c" />
      <rect x="39" y="36" width="20" height="12" fill="#2c7a44" /><path d="M19 48h40v8a3 3 0 0 1-3 3H22a3 3 0 0 1-3-3z" fill="#245a34" /><rect x="19" y="36" width="20" height="12" fill="#1f5a38" />
    </Office>
  ),
  source: (
    <>
      <circle cx="36" cy="36" r="39" fill="#2060ec" />
      <circle cx="38" cy="33" r="11.500" fill="none" stroke="#fff" strokeWidth="10" />
      <path d="M33 44h10v15H33z" fill="#fff" />
    </>
  ),
  teams: (
    <Office a="#4a50b8" b="#3c42a4" letter="T" x={9}>
      <circle cx="36" cy="19" r="8" fill="#7b83eb" /><circle cx="53" cy="21" r="6" fill="#5059c9" />
      <path d="M44 30h17v14q0 8-9 9z" fill="#5059c9" /><path d="M24 30h26v17a13 13 0 0 1-26 0z" fill="#7b83eb" />
    </Office>
  ),
  word: (
    <Office a="#1c56b8" b="#164aa4" letter="W">
      <rect x="19" y="12" width="40" height="47" rx="3" fill="#3f7fd8" /><path d="M19 24V15a3 3 0 0 1 3-3h34a3 3 0 0 1 3 3v9z" fill="#58a4ea" />
      <rect x="19" y="36" width="40" height="12" fill="#2458b8" /><path d="M19 48h40v8a3 3 0 0 1-3 3H22a3 3 0 0 1-3-3z" fill="#1a3c88" />
    </Office>
  ),
  ppt: (
    <Office a="#c84a2a" b="#b43c20" letter="P" x={9}>
      <circle cx="38" cy="36" r="24" fill="#e0603c" /><path d="M38 12a24 24 0 0 1 24 24H38z" fill="#f29a78" /><path d="M14 36h48a24 24 0 0 1-48 0z" fill="#cc5030" />
    </Office>
  ),
  folder: (
    <>
      <path d="M-4 8q0-5 5-5h20q3 0 6 4l3 3h42q4 0 4 5v8H-4z" fill="#4fa4d8" />
      <rect x="-4" y="15" width="80" height="56" rx="4" fill="url(#fd)" />
      <path d="M-4 64h80" stroke="#4a9ccc" strokeWidth="1.500" />
    </>
  ),
};

function Defs() {
  return (
    <svg className="absolute size-0">
      <defs>
        <linearGradient id="fb" x2="0" y2="1"><stop stopColor="#4fc0f8" /><stop offset="1" stopColor="#2a62e8" /></linearGradient>
        <linearGradient id="sf" x2="0" y2="1"><stop stopColor="#3fa8f4" /><stop offset="1" stopColor="#2a6ae0" /></linearGradient>
        <linearGradient id="fo" x2="0" y2="1"><stop stopColor="#f8b040" /><stop offset="1" stopColor="#ec5a6a" /></linearGradient>
        <linearGradient id="zm" x2="0" y2="1"><stop stopColor="#3474f4" /><stop offset=".5" stopColor="#2258ee" /><stop offset="1" stopColor="#1a44d0" /></linearGradient>
        <linearGradient id="dc" x2="0" y2="1"><stop stopColor="#7880f0" /><stop offset="1" stopColor="#5058e8" /></linearGradient>
        <linearGradient id="tg" x2="0" y2="1"><stop stopColor="#5cb8f0" /><stop offset="1" stopColor="#3488c8" /></linearGradient>
        <linearGradient id="ij" x2="1" y2="1"><stop stopColor="#f8a050" /><stop offset=".25" stopColor="#e83c8c" /><stop offset=".5" stopColor="#2a62f0" /><stop offset=".8" stopColor="#3a9cf4" /><stop offset="1" stopColor="#7a50e0" /></linearGradient>
        <linearGradient id="fd" x2="0" y2="1"><stop stopColor="#74c8f2" /><stop offset="1" stopColor="#5cb2e2" /></linearGradient>
        <linearGradient id="tr"><stop stopColor="#5a5c5e" /><stop offset=".4" stopColor="#b4b6b8" /><stop offset="1" stopColor="#58595b" /></linearGradient>
      </defs>
    </svg>
  );
}

function DockIcon({ name, dot }: { name: string; dot?: boolean }) {
  return (
    <div className="flex w-[97.1px] shrink-0 flex-col items-center pt-[18px]">
      <div className="relative">
        <svg viewBox="0 0 72 72" className="size-[72px] overflow-visible">{ART[name]}</svg>
        {name === "discord" && <FaDiscord className="absolute left-[9px] top-[9px] size-[54px] text-white" />}
        {name === "telegram" && <FaTelegramPlane className="absolute left-[16px] top-[17px] size-[36px] text-white" />}
      </div>
      {dot && <span className="mt-[17px] size-[8px] rounded-full bg-[#93a9d4]" />}
    </div>
  );
}

function Badge({ children, className }: { children: React.ReactNode; className: string }) {
  return <svg viewBox="0 0 72 72" className={"absolute size-[27px] overflow-visible " + className}>{children}</svg>;
}

function Minis() {
  const logs = Array.from({ length: 13 }, (_, i) => i);
  return (
    <div className="flex items-center pb-[7px]">
      <div className="relative h-[63px] w-[84px] bg-[#1e1f22]">
        <div className="h-[5px] bg-[#2c2d31]" />
        <div className="absolute left-[43px] top-[13px] h-[14px] w-[33px] bg-[#3c5468] pt-[2px] text-center text-[5px] leading-[6px] text-white">3:59 PM</div>
        <div className="grid w-[36px] grid-cols-2 gap-x-[6px] gap-y-[8px] pl-[10px] pt-[15px]">
          <span className="size-[9px] rounded-[3px] bg-[#f0703a]" /><span className="size-[9px] rounded-[3px] bg-[#2c3c68]" />
          <span className="size-[9px] rounded-[3px] bg-[#2f6cf0]" /><span className="size-[9px] rounded-[3px] bg-[#2c3c68]" />
        </div>
        <Badge className="bottom-[-8px] right-[2px]">{ART.zoom}</Badge>
      </div>
      <div className="relative ml-[12px] h-[84px] w-[84px] rounded-[2px] bg-[#1f1f1f] px-[4px] pt-[3px] text-[3px] leading-[5px] text-[#ccc]">
        <div className="flex gap-px"><span className="size-[2.500px] rounded-full bg-[#ed6a5e]" /><span className="size-[2.500px] rounded-full bg-[#f5bf4f]" /><span className="size-[2.500px] rounded-full bg-[#61c554]" /></div>
        <div className="mt-[8px] text-[4px] font-bold underline">TESTING</div>
        <div className="mt-[4px]">In the log, the number after clicking the application. Our version number is still at V3.0, when it should be version 4.</div>
        <div className="mt-[3px]">Jdk 11 has been reported to macOS since 2023, so this might confuse some users.</div>
        <div className="mt-[2px]">Steps to reproduce:</div><div className="mt-[3px] font-bold">Expected</div><div>Error message is shown</div>
        <Badge className="bottom-[3px] right-[2px]">{ART.notes}</Badge>
      </div>
      <div className="relative ml-[11px] h-[59px] w-[90px] rounded-[4px] border-2 border-[#d0d4d8] bg-black p-[3px]">
        <div className="h-[49px] overflow-hidden bg-[#1e1e1e] text-[2.600px] leading-[3.700px] text-[#ddd]">
          {logs.map((i) => <div key={i} className="whitespace-nowrap">Nov 17, 2023 4:49:{10 + i} PM seedu.address.storage.Json readJsonFile</div>)}
        </div>
        <div className="absolute left-[32px] top-[57px] rounded-full bg-[#0d3262] px-[6px] text-[19px] leading-[26px] tracking-[-0.5px] text-white">java…</div>
      </div>
      <div className="relative ml-[9px] h-[72px] w-[84px] bg-[#fafafa]">
        <div className="h-[3px] bg-[#666]" />
        <svg viewBox="0 0 84 69" className="h-[69px] w-[84px]">
          <circle cx="10" cy="7" r="4" fill="none" stroke="#334a88" strokeWidth="2.500" /><path d="M3 17h6M11 17h6" stroke="#334a88" strokeWidth="3" />
          <path d="M22 0v52M52 0v52" stroke="#bbb" strokeWidth=".8" />
          <circle cx="68" cy="18" r="10" fill="none" stroke="#3c82e0" strokeWidth="4" /><path d="M68 8a10 10 0 0 1 10 10" fill="none" stroke="#8a40d0" strokeWidth="4" /><path d="M78 18a10 10 0 0 1-10 10" fill="none" stroke="#f0903a" strokeWidth="4" /><path d="M68 28a10 10 0 0 1-10-10" fill="none" stroke="#4ab860" strokeWidth="4" />
          <path d="M2 57h52" stroke="#8aa0c8" strokeWidth="2" /><rect y="65" width="84" height="4" fill="#4a62a0" />
        </svg>
        <div className="absolute bottom-[-4px] right-0 h-[25px] w-[29px] border border-[#333] bg-[#161616] pl-[3px] text-[7px] leading-[9px] text-[#5ad060]">exec</div>
      </div>
      {[0, 1].map((k) => (
        <div key={k} className={"relative flex h-[52px] w-[84px] bg-white " + (k ? "ml-[12px]" : "ml-[14px]")}>
          <div className="flex w-[13px] flex-col gap-[4px] bg-[#55585c] px-[3px] pt-[6px]">
            <span className="h-[9px] bg-white" /><span className="h-[9px] bg-white" /><span className="h-[9px] bg-white" />
          </div>
          <svg viewBox="0 0 71 52" className="h-[52px] w-[71px]">
            <rect width="71" height="4" fill="#66686a" />
            {k ? (
              <g stroke="#999" strokeWidth=".6">
                <path d="M4 8h65M4 14h65M4 20h65M4 26h65M4 32h65M4 38h65M4 44h65M34 4v48M50 4v48M60 4v48" />
                <path d="M6 18h20" stroke="#2a4a80" strokeWidth="5" /><path d="M37 23h10M37 35h10M63 11h6" stroke="#7ab0e8" strokeWidth="3" /><path d="M8 35h14M10 42h12M52 35h6" stroke="#e8e060" strokeWidth="3" />
              </g>
            ) : (
              <g>
                <path d="M14 8h44M14 11h36M10 36h44M10 40h40M10 44h48M10 48h30" stroke="#889" strokeWidth="1" />
                <rect x="26" y="18" width="10" height="10" fill="#a8c4f0" /><rect x="12" y="16" width="8" height="7" fill="#f4c8c8" /><circle cx="46" cy="20" r="4" fill="none" stroke="#7090e0" strokeWidth="2" /><rect x="54" y="24" width="10" height="6" fill="#f4c8c8" />
              </g>
            )}
          </svg>
          <Badge className="bottom-[-14px] right-[1px]">{ART.preview}</Badge>
        </div>
      ))}
      <svg viewBox="0 0 64 82" className="ml-[24px] h-[82px] w-[64px]">
        <path d="M1 11 7 73q1 8 25 8t25-8l6-62z" fill="url(#tr)" />
        <path d="M5 35q27 14 54 0" fill="none" stroke="#ffffff33" strokeWidth="6" />
        <ellipse cx="32" cy="11" rx="31" ry="7" fill="#3a3a3a" />
        <path d="M4 11 12 3l8 4 9-6 8 5 9-5 5 6 9 5-8 5-12-2-10 4-12-3-10 2z" fill="#dcdcdc" />
        <path d="m14 6 5 9M28 4l-4 12M42 5l3 11" stroke="#777" /><path d="m34 8 6 3-4 4zM18 11l5 2-3 3z" fill="#d06a3a" /><path d="m44 9 5 3-4 3z" fill="#3a6ac0" />
      </svg>
    </div>
  );
}

function Dock() {
  const left: [string, boolean][] = [["finder", true], ["launch", false], ["preview", true], ["safari", false], ["notes", true], ["freeform", true], ["calendar", false], ["zoom", true], ["outlook", true], ["discord", true], ["chrome", true], ["telegram", false], ["terminal", true], ["idea", false]];
  const right = ["excel", "source", "teams", "word", "ppt", "folder"];
  return (
    <div className="absolute left-[81px] top-[1669px] flex h-[122px] w-[2718px] rounded-[36px] border-2 border-white/20 bg-[linear-gradient(90deg,#131a38_0,#131f42_180px,#123f70_330px,#143668_460px,#131b38_600px,#131b38_1000px,#11456f_1140px,#13345a_1320px,#133c70_1700px,#12407e_2300px,#145a96_2560px,#114684_2718px)] bg-origin-border pl-[3px]">
      <Defs />
      {left.map(([n, d]) => <DockIcon key={n} name={n} dot={d} />)}
      <span className="mx-[20px] mt-[16px] h-[88px] w-[2px] bg-[#5d7ba4]" />
      {right.map((n) => <DockIcon key={n} name={n} dot />)}
      <span className="ml-[22px] mr-[27px] mt-[16px] h-[88px] w-[2px] bg-[#5d86b8]" />
      <Minis />
    </div>
  );
}

function TalkingPill() {
  return (
    <div className="absolute left-[2397px] top-[1595px] flex h-[82px] w-[482px] items-center rounded-[18px] bg-[#040404] pt-[2px] text-[25px] font-medium tracking-[-0.8px] text-[#f0f0f0] shadow-[0_0_30px_rgba(0,0,0,0.25)]">
      <svg viewBox="0 0 40 22" className="-mt-[4px] ml-[41px] h-[22px] w-[40px]" fill="none" stroke="#e0e0e0" strokeWidth="5" strokeLinecap="round" strokeLinejoin="round">
        <path d="M3 19 20 3l17 16" />
      </svg>
      <span className="ml-[40px]">Talking:</span>
    </div>
  );
}

export default function App() {
  return (
    <div className="relative h-[1800px] w-[2880px] overflow-hidden bg-black font-[Inter]">
      <Wallpaper />
      <DesktopLabels />
      <ChromeBehind />
      <NestedChrome />
      <PreviewBehind />
      <Dock />
      <MainWindow />
      <MenuBar />
      <TalkingPill />
    </div>
  );
}
